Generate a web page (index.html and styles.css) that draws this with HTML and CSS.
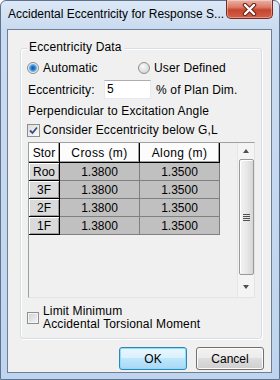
FILE: index.html
```html
<!DOCTYPE html>
<html lang="en">
<head>
    <meta charset="UTF-8">
    <title>Accidental Eccentricity for Response Spectrum</title>
    <link rel="stylesheet" href="styles.css">
</head>
<body>
<div class="window">
    <div class="titlebar">
        <span class="title">Accidental Eccentricity for Response S...</span>
        <span class="close">
            <svg width="17" height="13" viewBox="0 0 17 13">
                <path d="M4 2 L13 11 M13 2 L4 11" stroke="#6b2318" stroke-width="4.5" stroke-linecap="round"/>
                <path d="M4 2 L13 11 M13 2 L4 11" stroke="#fff" stroke-width="2.4" stroke-linecap="round"/>
            </svg>
        </span>
    </div>
    <div class="client">
        <div class="group">
            <span class="group-title">Eccentricity Data</span>

            <div class="row radios">
                <label class="opt first"><span class="radio on"></span>Automatic</label>
                <label class="opt"><span class="radio"></span>User Defined</label>
            </div>

            <div class="row ecc">
                <span class="ecc-label">Eccentricity:</span>
                <span class="textbox">5</span>
                <span class="unit">% of Plan Dim.</span>
            </div>

            <div class="row text-line">Perpendicular to Excitation Angle</div>

            <label class="row opt below">
                <span class="check">
                    <svg width="9" height="9" viewBox="0 0 9 9"><path d="M1 4.5 L3.5 7 L8 1.5" fill="none" stroke="#3b4f7c" stroke-width="1.8"/></svg>
                </span>Consider Eccentricity below G,L
            </label>

            <div class="grid">
                <table class="sheet">
                    <tr>
                        <th class="col-story">Stor</th>
                        <th class="col-val">Cross (m)</th>
                        <th class="col-val">Along (m)</th>
                    </tr>
                    <tr><td class="story">Roo</td><td>1.3800</td><td>1.3500</td></tr>
                    <tr><td class="story">3F</td><td>1.3800</td><td>1.3500</td></tr>
                    <tr><td class="story">2F</td><td>1.3800</td><td>1.3500</td></tr>
                    <tr><td class="story">1F</td><td>1.3800</td><td>1.3500</td></tr>
                </table>
                <div class="vscroll">
                    <span class="arrow up"></span>
                    <span class="thumb"><span class="grip"></span></span>
                    <span class="arrow down"></span>
                </div>
            </div>

            <label class="row opt limit">
                <span class="check empty"></span>
                <span class="two-line">Limit Minimum<br>Accidental Torsional Moment</span>
            </label>
        </div>

        <div class="buttons">
            <button class="btn default">OK</button>
            <button class="btn">Cancel</button>
        </div>
    </div>
</div>
</body>
</html>
```

FILE: styles.css
```css
* { box-sizing: border-box; }
body { margin: 0; font-family: "Liberation Sans", Arial, sans-serif; font-size: 12px; color: #000; }

.window { width: 280px; height: 380px; display: flex; flex-direction: column; padding: 0 7px 6px 6px; border: 1px solid #5d7390; border-radius: 6px 6px 0 0; background: linear-gradient(#dde8f6, #c9dbf0 28px, #bfd4ee); }
.titlebar { height: 28px; display: flex; align-items: flex-start; justify-content: space-between; }
.title { padding: 6px 0 0 1px; line-height: 15px; white-space: nowrap; }
.close { width: 47px; height: 19px; margin: -1px -1px 0 0; display: flex; align-items: center; justify-content: center; border: 1px solid #7a2a1f; border-top: none; border-radius: 0 0 5px 5px; background: linear-gradient(#eab1a4, #dc7b69 40%, #c7452e 55%, #d2604a); box-shadow: inset 0 0 0 1px rgba(255,255,255,0.35); }

.client { flex: 1; display: flex; flex-direction: column; background: #f0f0f0; border: 1px solid #6f7f93; letter-spacing: 0.15px; }

.group { margin: 18px 0 0 12px; width: 242px; height: 291px; padding-left: 6px; display: flex; flex-direction: column; border: 1px solid #d5dfe5; border-radius: 3px; box-shadow: 1px 1px 0 #fff, inset 1px 1px 0 #fff; }
.group-title { align-self: flex-start; margin-top: -9px; padding: 0 2px; line-height: 14px; background: #f0f0f0; }

.row { display: flex; align-items: center; }
.opt { display: flex; align-items: center; }
.radios { margin-top: 6px; height: 16px; }
.first { width: 111px; }
.radio { width: 12px; height: 12px; margin-right: 4px; border-radius: 50%; border: 1px solid #8e8f8f; background: radial-gradient(circle at 40% 35%, #fbfbfb, #d9d9d9 70%, #c9c9c9); }
.radio.on { background: radial-gradient(circle at 50% 50%, #1a4c93 0, #2c7fd0 2px, #64b6ef 3.5px, #eaeaea 4.5px, #d8d8d8 6px); }

.ecc { margin-top: 4px; height: 19px; }
.ecc-label { width: 77px; padding-left: 1px; }
.textbox { width: 47px; height: 19px; padding: 0 0 0 2px; line-height: 17px; background: #fff; border: 1px solid #e3e9ef; border-top-color: #abadb3; }
.unit { margin-left: 5px; }

.text-line { margin-top: 5px; height: 15px; padding-left: 1px; line-height: 15px; }

.below { margin-top: 3px; height: 16px; }
.check { width: 13px; height: 13px; margin-right: 3px; display: flex; align-items: center; justify-content: center; border: 1px solid #8e8f8f; background: linear-gradient(135deg, #dcdcdc, #fbfbfb); }
.check.empty { width: 12px; height: 12px; margin-right: 4px; background: linear-gradient(135deg, #cfcfcf, #f6f6f6); box-shadow: inset 0 0 0 1px #f4f4f4; }

.grid { margin: 4px 0 0 1px; width: 227px; height: 156px; display: flex; align-items: flex-start; border: 1px solid #a0a0a0; border-right-color: #e3e3e3; border-bottom-color: #e3e3e3; }
.sheet { border-collapse: separate; border-spacing: 0; }
.sheet th, .sheet td { padding: 0; font-weight: normal; text-align: center; white-space: nowrap; overflow: hidden; }
.sheet th { height: 20px; background: #fcfcfc; border-right: 1px solid #000; border-bottom: 1px solid #000; box-shadow: inset -1px -1px 0 #a0a0a0; }
.col-story { width: 31px; max-width: 31px; }
.col-val { width: 80px; letter-spacing: 0.4px; }
.sheet td { height: 18px; background: #c0c0c0; border-right: 1px solid #808080; border-bottom: 1px solid #808080; letter-spacing: 0; }
.sheet td.story { max-width: 31px; background: #dadada; border-right-color: #000; border-bottom-color: #000; box-shadow: inset 1px 1px 0 #fff, inset -1px -1px 0 #9a9a9a; }

.vscroll { margin-left: auto; width: 17px; height: 154px; display: flex; flex-direction: column; align-items: center; background: #f4f4f4; border-left: 1px solid #e6e6e6; }
.arrow { width: 0; height: 0; border-left: 3.5px solid transparent; border-right: 3.5px solid transparent; }
.arrow.up { margin-top: 6px; border-bottom: 4px solid #4f4f4f; }
.arrow.down { margin-top: 10px; border-top: 4px solid #4f4f4f; }
.thumb { margin-top: 6px; width: 15px; height: 116px; display: flex; align-items: center; justify-content: center; border: 1px solid #9a9a9a; border-radius: 2px; background: linear-gradient(90deg, #f3f3f3, #e8e8e8 50%, #d6d6d6); box-shadow: inset 1px 1px 0 #fff; }
.grip { width: 7px; height: 7px; background: repeating-linear-gradient(#4f4f4f 0 1px, transparent 1px 2px); }

.limit { margin-top: 7px; }
.two-line { line-height: 13px; }

.buttons { margin: 8px 7px 0 0; display: flex; justify-content: flex-end; gap: 9px; }
.btn { width: 68px; height: 23px; padding: 0; font: 12px "Liberation Sans", Arial, sans-serif; color: #000; border: 1px solid #707070; border-radius: 3px; background: linear-gradient(#f2f2f2, #ebebeb 50%, #dddddd 50%, #cfcfcf); box-shadow: inset 0 0 0 1px #fcfcfc; }
.btn.default { border-color: #3c7fb1; background: linear-gradient(#eaf6fd, #d9f0fc 50%, #bee6fd 50%, #a7d9f5); box-shadow: inset 0 0 0 1px #7de4ff; }
```
